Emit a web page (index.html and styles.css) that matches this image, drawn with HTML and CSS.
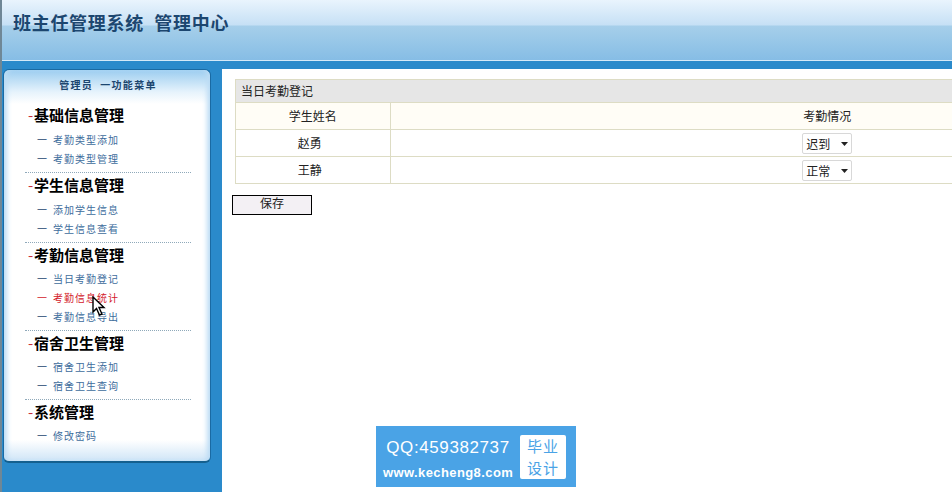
FILE: index.html
```html
<!DOCTYPE html>
<html lang="zh">
<head>
  <meta charset="UTF-8">
  <title>班主任管理系统</title>
  <link rel="stylesheet" href="styles.css">
</head>
<body>

  <div class="header">
    <h1>班主任管理系统&nbsp; 管理中心</h1>
  </div>

  <div class="main">
    <div class="left">
      <div class="menu">
        <div class="menu-title">管理员 &nbsp;一功能菜单</div>

        <div class="group">
          <h2><span class="dash">-</span>基础信息管理</h2>
          <a class="item" href="#">考勤类型添加</a>
          <a class="item" href="#">考勤类型管理</a>
        </div>
        <div class="group">
          <h2><span class="dash">-</span>学生信息管理</h2>
          <a class="item" href="#">添加学生信息</a>
          <a class="item" href="#">学生信息查看</a>
        </div>
        <div class="group">
          <h2><span class="dash">-</span>考勤信息管理</h2>
          <a class="item" href="#">当日考勤登记</a>
          <a class="item hover" href="#">考勤信息统计</a>
          <a class="item" href="#">考勤信息导出</a>
        </div>
        <div class="group">
          <h2><span class="dash">-</span>宿舍卫生管理</h2>
          <a class="item" href="#">宿舍卫生添加</a>
          <a class="item" href="#">宿舍卫生查询</a>
        </div>
        <div class="group last">
          <h2><span class="dash">-</span>系统管理</h2>
          <a class="item" href="#">修改密码</a>
        </div>
      </div>
      <svg class="cursor" width="14" height="21" viewBox="0 0 14 21">
        <path d="M1 1 L1 16 L4.5 12.5 L7.5 19 L10 18 L7 11.5 L12 11.5 Z" fill="#fff" stroke="#000" stroke-width="1.4"/>
      </svg>
    </div>

    <div class="content">
      <div class="panel">
        <div class="panel-title">当日考勤登记</div>
        <table>
          <tr class="head">
            <td class="name">学生姓名</td>
            <td class="state">考勤情况</td>
          </tr>
          <tr>
            <td class="name student">赵勇</td>
            <td class="state"><select><option>迟到</option></select></td>
          </tr>
          <tr>
            <td class="name student">王静</td>
            <td class="state"><select><option>正常</option></select></td>
          </tr>
        </table>
      </div>
      <button class="save">保存</button>

      <div class="promo">
        <div class="promo-text">
          <div class="qq">QQ:459382737</div>
          <div class="site">www.kecheng8.com</div>
        </div>
        <div class="promo-box">
          <div>毕业</div>
          <div>设计</div>
        </div>
      </div>
    </div>
  </div>

</body>
</html>
```

FILE: styles.css
```css
* {
  box-sizing: border-box;
}

body {
  margin: 0;
  width: 952px;
  height: 492px;
  overflow: hidden;
  border-left: 2px solid #6f8796;
  font-family: "Noto Sans CJK SC", "Liberation Sans", sans-serif;
  font-size: 12px;
  background-color: white;
}

.header {
  height: 62px;
  background: linear-gradient(to bottom, #e9f4fd 0, #c6e0f5 25px, #a6cfea 26px, #86bde5 60px, #d4e9f8 60px, #d4e9f8 61px, #2a8acb 61px);
}

.header h1 {
  margin: 0;
  padding: 13px 0 0 11px;
  font-family: "Liberation Serif", "Noto Sans CJK SC", serif;
  font-size: 18px;
  line-height: 22px;
  letter-spacing: 0.7px;
  font-weight: bold;
  color: #1c466f;
}

.main {
  display: flex;
  height: 430px;
  background-color: #2a8acb;
}

.left {
  position: relative;
  flex: none;
  width: 220px;
  padding: 7px 0 0 1px;
}

.menu {
  width: 208px;
  height: 394px;
  padding: 0 19px 0 21px;
  border: 1px solid #1a6aa3;
  border-bottom: 2px solid #14608f;
  border-radius: 6px;
  background: linear-gradient(to bottom, #9ccdf0 0, #e6f3fc 22px, white 34px, white 370px, #cfe5f7 391px);
  box-shadow: inset 5px 0 5px -2px #bcdcf4, inset -5px 0 5px -2px #bcdcf4;
}

.menu-title {
  height: 33px;
  padding-top: 6px;
  text-align: center;
  font-size: 10px;
  line-height: 18px;
  letter-spacing: 1.3px;
  font-weight: bold;
  color: #1c466f;
  white-space: nowrap;
}

.group {
  height: 70px;
  padding-left: 3px;
  border-bottom: 1px dotted #8fa9ba;
}

.group:nth-child(4) {
  height: 88px;
}

.group:nth-child(5) {
  height: 69px;
}

.group.last {
  border-bottom: none;
}

.group h2 {
  margin: 0;
  height: 27px;
  font-size: 15px;
  line-height: 24px;
  font-weight: bold;
  color: black;
  white-space: nowrap;
}

.group:nth-child(n+4) h2 {
  height: 26px;
}

.dash {
  display: inline-block;
  width: 6px;
  font-weight: normal;
  color: #c8303a;
}

.item {
  display: block;
  height: 19px;
  padding-left: 9px;
  font-size: 10px;
  line-height: 19px;
  letter-spacing: 1px;
  color: #3d6c9c;
  text-decoration: none;
  white-space: nowrap;
}

.item::before {
  content: "一";
  display: inline-block;
  width: 16px;
  color: #1c466f;
}

.item.hover,
.item.hover::before {
  color: #d3182a;
}

.cursor {
  position: absolute;
  left: 90px;
  top: 234px;
}

.content {
  position: relative;
  flex: 1;
  min-width: 0;
  margin-top: 7px;
  padding: 10px 0 0 10px;
  background-color: white;
}

.panel {
  margin-left: 3px;
  border-left: 1px solid #dddcc4;
}

.panel-title {
  height: 23px;
  padding-left: 5px;
  border-top: 1px solid #dddcc4;
  background-color: #e6e6e6;
  line-height: 22px;
  color: #222;
}

table {
  width: 100%;
  border-collapse: collapse;
  table-layout: fixed;
}

td {
  height: 27px;
  padding: 0 0 2px;
  border-top: 1px solid #dddcc4;
  border-bottom: 1px solid #dddcc4;
  text-align: center;
  color: #222;
}

.head td {
  background-color: #fffdf6;
}

.name {
  width: 154px;
  border-right: 1px solid #dddcc4;
}

td.student {
  padding-right: 6px;
}

td.state {
  padding-left: 312px;
}

select {
  appearance: none;
  display: block;
  width: 50px;
  height: 21px;
  margin: 2px auto 0;
  padding: 0 0 0 3px;
  font-family: "Noto Sans CJK SC", sans-serif;
  font-size: 12px;
  color: #222;
  background: white url("data:image/svg+xml,%3Csvg xmlns='http://www.w3.org/2000/svg' width='7' height='4'%3E%3Cpath d='M0 0h7L3.5 4z' fill='%23222'/%3E%3C/svg%3E") no-repeat 38px 8px;
  border: 1px solid #d8d8d8;
  border-radius: 2px;
}

.save {
  display: block;
  width: 80px;
  height: 20px;
  margin-top: 11px;
  padding: 0 0 4px;
  font-family: "Noto Sans CJK SC", sans-serif;
  font-size: 12px;
  line-height: 14px;
  color: #222;
  background-color: #f3f0f4;
  border: 1px solid black;
  border-radius: 0;
}

.promo {
  position: absolute;
  left: 154px;
  top: 357px;
  display: flex;
  align-items: center;
  gap: 7px;
  width: 200px;
  height: 61px;
  padding-left: 7px;
  background-color: #4aa3e6;
  color: white;
}

.promo-text {
  width: 130px;
  padding-top: 5px;
  white-space: nowrap;
}

.qq {
  font-family: "Liberation Sans", sans-serif;
  font-size: 17px;
  line-height: 22px;
  letter-spacing: 0.6px;
  text-align: center;
}

.site {
  margin-top: 6px;
  font-family: "Liberation Sans", sans-serif;
  font-size: 13px;
  line-height: 16px;
  letter-spacing: 0.4px;
  font-weight: bold;
}

.promo-box {
  width: 46px;
  height: 44px;
  border-radius: 2px;
  background-color: white;
  color: #4aa3e6;
  font-size: 15px;
  line-height: 22px;
  letter-spacing: 1px;
  text-align: center;
}
```
